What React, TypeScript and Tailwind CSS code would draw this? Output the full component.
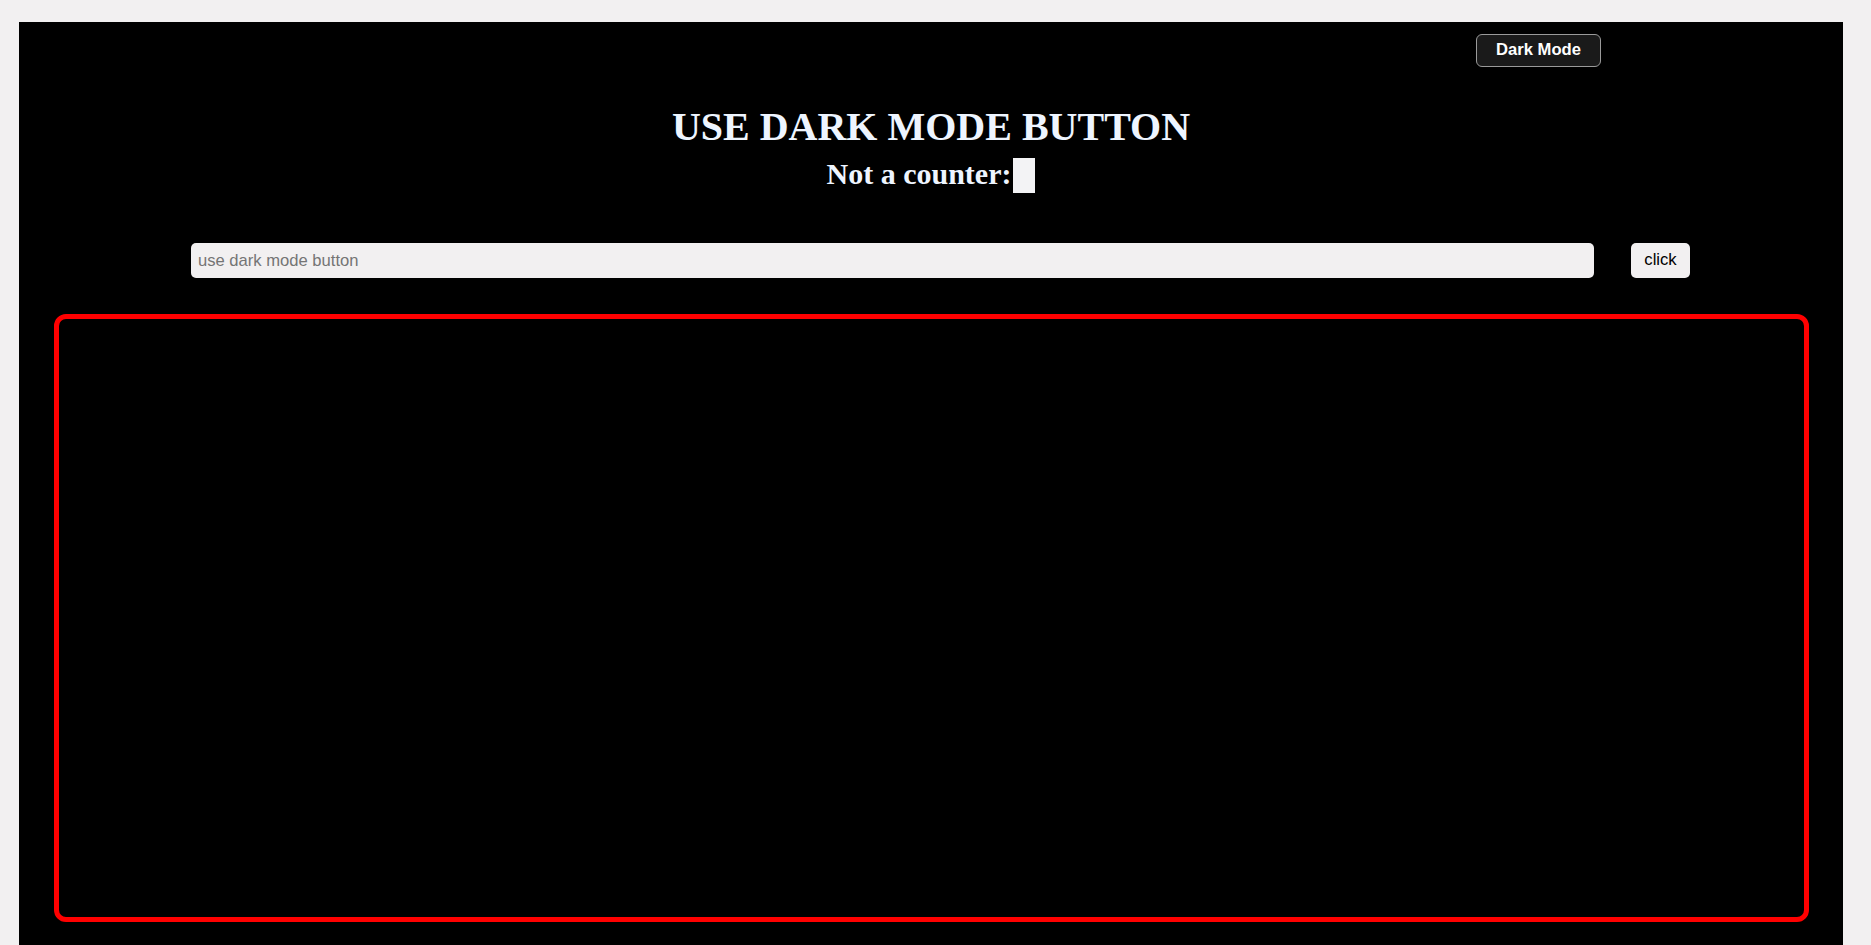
export default function App() {
  return (
    <div className="min-h-screen bg-[#f2f0f1] pt-[22px] pl-[19px] pr-[28px] font-['Liberation_Sans',Arial,sans-serif]">
      <main className="bg-black min-h-[940px] pb-[30px]">
        <div className="flex justify-end pt-[12px] pr-[242px]">
          <button className="h-[33px] w-[125px] rounded-[6px] border border-[#9a9a9a] bg-[#1a1a1a] text-white text-[16.6px] font-bold">
            Dark Mode
          </button>
        </div>

        <h1 className="mt-[37px] text-center font-['Liberation_Serif','Times_New_Roman',serif] text-[40px] leading-[46px] font-bold text-[#eef5ff]">
          USE DARK MODE BUTTON
        </h1>
        <div className="mt-[7px] flex justify-center items-start">
          <span className="font-['Liberation_Serif','Times_New_Roman',serif] text-[30px] leading-[34px] font-bold text-[#eef5ff]">
            Not a counter:
          </span>
          <span className="mt-[1px] ml-[2px] h-[35px] w-[22px] bg-[#f3f3f5]"></span>
        </div>

        <div className="mt-[50px] flex gap-[37px] pl-[172px] pr-[153px]">
          <input
            type="text"
            placeholder="use dark mode button"
            className="h-[35px] flex-1 rounded-[5px] bg-[#f2f0f1] px-[7px] text-[16.6px] text-black placeholder:text-[#757575] outline-none"
          />
          <button className="h-[35px] w-[59px] rounded-[5px] bg-[#f2f0f1] text-[16.6px] text-black">
            click
          </button>
        </div>

        <section className="mt-[36px] mx-[35px] mr-[34px] h-[608px] rounded-[12px] border-[5px] border-[#ff0000]"></section>
      </main>
    </div>
  );
}
